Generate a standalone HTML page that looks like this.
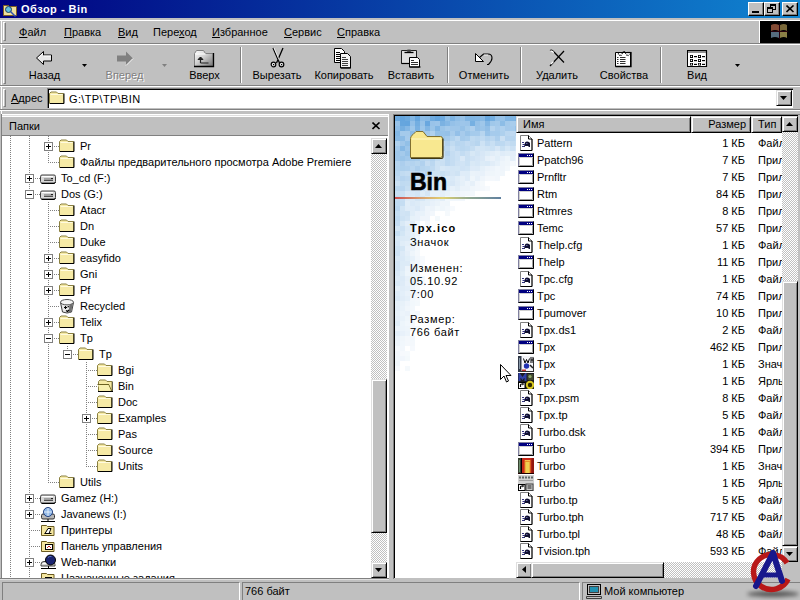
<!DOCTYPE html>
<html><head><meta charset="utf-8"><style>
*{margin:0;padding:0;box-sizing:border-box}
html,body{width:800px;height:600px;overflow:hidden;background:#c0c0c0;font-family:"Liberation Sans",sans-serif;font-size:11px;color:#000}
.a{position:absolute}
.t{position:absolute;white-space:pre;line-height:13px}
.u{text-decoration:underline;text-underline-offset:1px}
.tb{position:absolute;top:2px;width:16px;height:14px;background:#c0c0c0;border-top:1px solid #fff;border-left:1px solid #fff;border-right:1px solid #000;border-bottom:1px solid #000;box-shadow:inset -1px -1px 0 #808080}
.etch-h{position:absolute;height:2px;border-top:1px solid #808080;border-bottom:1px solid #fff}
.grip{position:absolute;width:3px;border-left:1px solid #fff;border-top:1px solid #fff;border-right:1px solid #808080;border-bottom:1px solid #808080}
.sep{position:absolute;width:2px;border-left:1px solid #808080;border-right:1px solid #fff}
.dl{position:absolute;width:1px;background-image:linear-gradient(to bottom,#808080 50%,transparent 50%);background-size:1px 2px}
.dh{position:absolute;height:1px;background-image:linear-gradient(to right,#808080 50%,transparent 50%);background-size:2px 1px}
.pb{position:absolute;width:9px;height:9px;border:1px solid #808080;background:#fff}
.pb:before{content:"";position:absolute;left:1px;top:3px;width:5px;height:1px;background:#000}
.pb.p:after{content:"";position:absolute;left:3px;top:1px;width:1px;height:5px;background:#000}
.track{background-color:#fff;background-image:linear-gradient(45deg,#c0c0c0 25%,transparent 25%,transparent 75%,#c0c0c0 75%),linear-gradient(45deg,#c0c0c0 25%,transparent 25%,transparent 75%,#c0c0c0 75%);background-size:2px 2px;background-position:0 0,1px 1px}
.btn{position:absolute;background:#c0c0c0;border-top:1px solid #dfdfdf;border-left:1px solid #dfdfdf;border-right:1px solid #000;border-bottom:1px solid #000;box-shadow:inset 1px 1px 0 #fff,inset -1px -1px 0 #808080}
.ic{position:absolute;overflow:visible}
.dis{color:#808080;text-shadow:1px 1px 0 #fff}
</style></head><body>

<svg width="0" height="0" style="position:absolute">
<defs>
 <symbol id="folder" viewBox="0 0 16 16">
  <path d="M0.5 13.5V3.5L2 2h5.5L9 3.5h5.5v10z" fill="#f6eaa6" stroke="#8a8040"/>
  <path d="M1.5 4.5h12" fill="none" stroke="#fffbe0"/>
  <path d="M1 13.5h14V3.5" fill="none" stroke="#000"/>
 </symbol>
 <symbol id="folderopen" viewBox="0 0 16 16">
  <path d="M1.5 13.5V3.5L3 2h5.5L10 3.5h5v10z" fill="#f6eaa6" stroke="#8a8040"/>
  <path d="M1 13.5h15V3.5" fill="none" stroke="#000"/>
  <path d="M0.5 6.5h11l3 6.5" fill="none" stroke="#6a6020" stroke-width="1.2"/>
  <path d="M1 7h10.5l2.5 5.5h-11z" fill="#f8f0b0"/>
 </symbol>
 <symbol id="drive" viewBox="0 0 16 16">
  <path d="M0.5 6.5q0-1.5 1.5-1.5h12q1.5 0 1.5 1.5v5q0 1.5-1.5 1.5h-12q-1.5 0-1.5-1.5z" fill="#d8d8d8" stroke="#404040"/>
  <path d="M2 6.5h11" fill="none" stroke="#fff"/>
  <rect x="4" y="8" width="9" height="2" fill="#a0a0a0"/>
  <path d="M4 10.5h9" fill="none" stroke="#505050"/>
  <path d="M11 8.5h2" fill="none" stroke="#202020"/>
  <path d="M1.5 13.5h13l1-1.5" fill="none" stroke="#000"/>
 </symbol>
 <symbol id="doc" viewBox="0 0 16 16">
  <path d="M2.5 15.5V0.5h8l3.5 3.5v11.5z" fill="#fff" stroke="#808080"/>
  <path d="M2.5 15.5h11.5V4M10.5 0.5v3.5h3.5" fill="none" stroke="#000"/>
  <path d="M7 7.5q1.5-1.5 4 -0.5l1 1v4h-1.5v-1h-3.5v1h-1z" fill="#101030"/>
  <path d="M4 7.5h2M4.5 9.5h2.5M4 11.5h2.5" fill="none" stroke="#303080"/>
  <path d="M8 8.5h1.5" fill="none" stroke="#6060a0"/>
 </symbol>
 <symbol id="app" viewBox="0 0 16 16">
  <rect x="0.5" y="1.5" width="15" height="13" fill="#fff" stroke="#8080a0"/>
  <path d="M0.5 14.5h15v-13" fill="none" stroke="#000"/>
  <rect x="1" y="2" width="14" height="3" fill="#000080"/>
  <path d="M9 3.5h1M11 3.5h1M13 3.5h1" fill="none" stroke="#fff"/>
  <path d="M1.5 13.5v-8h13" fill="none" stroke="#d0d0d0"/>
  <path d="M1.5 13.5h13v-8" fill="none" stroke="#a0a0a0"/>
 </symbol>
 <symbol id="cursor" viewBox="0 0 12 20">
  <path d="M0.5 0.5v15l3.5-3.5 2.5 6 2-1-2.5-5.5h5z" fill="#fff" stroke="#000"/>
 </symbol>
</defs>
</svg>

<div class="a" style="left:0;top:0;width:800px;height:18px;background:linear-gradient(to right,#000080 0%,#1084d0 100%)"></div>
<svg class="a" style="left:2px;top:1px" width="16" height="16" viewBox="0 0 16 16">
  <path d="M1.5 4.5h5l1 1h7v9h-13z" fill="#f0e0a0" stroke="#806020"/>
  <circle cx="6.5" cy="8.5" r="3" fill="#60c0e0" stroke="#204060"/>
  <path fill="none" d="M8.5 10.5l5 5" stroke="#3050b0" stroke-width="1.5"/>
</svg>
<div class="t" style="left:21px;top:3px;color:#fff;font-weight:bold;letter-spacing:0.5px">Обзор - Bin</div>
<div class="tb" style="left:748px"><div class="a" style="left:3px;top:8px;width:7px;height:2px;background:#000"></div></div>
<div class="tb" style="left:764px"><div class="a" style="left:5px;top:1px;width:6px;height:6px;border:1px solid #000;border-top-width:2px"></div><div class="a" style="left:2px;top:4px;width:6px;height:6px;border:1px solid #000;border-top-width:2px;background:#c0c0c0"></div></div>
<div class="tb" style="left:782px"><svg class="a" style="left:3px;top:2px" width="9" height="8"><path fill="none" d="M0.5 0.5l7 6.5M7.5 0.5l-7 6.5" stroke="#000" stroke-width="1.6"/></svg></div>
<div class="a" style="left:1px;top:19px;width:1px;height:95px;background:#fff"></div>
<div class="etch-h" style="left:0;top:19px;width:800px;border-top-color:#c0c0c0"></div>
<div class="grip" style="left:3px;top:22px;height:19px"></div>
<div class="t" style="left:19px;top:26px"><span class="u">Ф</span>айл</div>
<div class="t" style="left:64px;top:26px"><span class="u">П</span>равка</div>
<div class="t" style="left:118px;top:26px"><span class="u">В</span>ид</div>
<div class="t" style="left:153px;top:26px">Пере<span class="u">х</span>од</div>
<div class="t" style="left:212px;top:26px"><span class="u">И</span>збранное</div>
<div class="t" style="left:284px;top:26px"><span class="u">С</span>ервис</div>
<div class="t" style="left:337px;top:26px"><span class="u">С</span>правка</div>
<div class="a" style="left:759px;top:20px;width:41px;height:23px;background:#000;border-left:1px solid #fff;border-top:1px solid #fff"></div>
<svg class="a" style="left:768px;top:22px;opacity:0.8;filter:blur(0.4px)" width="24" height="18" viewBox="0 0 24 18">
  <path d="M3 3q4-2 8 0v6q-4-2-8 0z" fill="#b86848" opacity="0.9"/>
  <path d="M12 3q4-2 7 0v6q-3-2-7 0z" fill="#a89050" opacity="0.9"/>
  <path d="M3 10q4-2 8 0v6q-4-2-8 0z" fill="#7898b0" opacity="0.9"/>
  <path d="M12 10q4-2 7 0v6q-3-2-7 0z" fill="#c0b060" opacity="0.9"/>
  <path d="M11.5 2v15M3 9.5h17" stroke="#300010" stroke-width="1"/>
</svg>
<div class="etch-h" style="left:0;top:43px;width:800px"></div>
<div class="grip" style="left:3px;top:48px;height:36px"></div>
<div class="t" style="left:4.5px;width:80px;text-align:center;top:69px">Назад</div>
<div class="t dis" style="left:84.5px;width:80px;text-align:center;top:69px">Вперед</div>
<div class="t" style="left:164.5px;width:80px;text-align:center;top:69px">Вверх</div>
<div class="t" style="left:237px;width:80px;text-align:center;top:69px">Вырезать</div>
<div class="t" style="left:304px;width:80px;text-align:center;top:69px">Копировать</div>
<div class="t" style="left:371px;width:80px;text-align:center;top:69px">Вставить</div>
<div class="t" style="left:444px;width:80px;text-align:center;top:69px">Отменить</div>
<div class="t" style="left:517px;width:80px;text-align:center;top:69px">Удалить</div>
<div class="t" style="left:584px;width:80px;text-align:center;top:69px">Свойства</div>
<div class="t" style="left:657px;width:80px;text-align:center;top:69px">Вид</div>
<div class="sep" style="left:240px;top:47px;height:36px"></div>
<div class="sep" style="left:447px;top:47px;height:36px"></div>
<div class="sep" style="left:520px;top:47px;height:36px"></div>
<div class="sep" style="left:660px;top:47px;height:36px"></div>
<svg class="a" style="left:82px;top:64px" width="5" height="3"><path d="M0 0h5l-2.5 3z" fill="#000"/></svg>
<svg class="a" style="left:162px;top:64px" width="5" height="3"><path d="M0 0h5l-2.5 3z" fill="#808080"/></svg>
<svg class="a" style="left:735px;top:64px" width="5" height="3"><path d="M0 0h5l-2.5 3z" fill="#000"/></svg>

<svg class="ic" style="left:35px;top:51px" width="18" height="15" viewBox="0 0 18 15">
  <path d="M1.5 7l7-6.5v3.5h8v6h-8v3.5z" fill="#e8e8e8" stroke="#000"/>
  <path fill="none" d="M3 7l5-4.5M9 5h7" stroke="#fff"/>
</svg>
<svg class="ic" style="left:115px;top:51px" width="20" height="15" viewBox="0 0 20 15">
  <path d="M18 7.5l-7-7v4h-9v6h9v4z" fill="#808080"/>
  <path fill="none" d="M11 14.5l7-7" stroke="#fff"/>
</svg>
<svg class="ic" style="left:193px;top:49px" width="22" height="19" viewBox="0 0 22 19">
  <defs><linearGradient id="upg" x1="0" y1="0" x2="1" y2="1"><stop offset="0" stop-color="#ffffff"/><stop offset="0.45" stop-color="#d0d0d0"/><stop offset="1" stop-color="#707070"/></linearGradient></defs>
  <path d="M1.5 17.5V4.5L3.5 1.5h7l2 3h7.5v13z" fill="url(#upg)" stroke="#808080"/>
  <path d="M1 17.5h19.5V4" fill="none" stroke="#000" stroke-width="1.3"/>
  <path d="M2.5 5h10" fill="none" stroke="#fff"/>
  <path d="M7.5 14h8M7.5 14v-6" fill="none" stroke="#202020" stroke-width="1.2"/>
  <path d="M5 10.5l2.5-2.5 2.5 2.5z" fill="#202020" stroke="#202020"/>
</svg>
<svg class="ic" style="left:270px;top:47px" width="16" height="21" viewBox="0 0 16 21">
  <path d="M3 1L9.5 16M13 1L6.5 16" fill="none" stroke="#000" stroke-width="1.3"/>
  <path d="M4 1l5 11.5" fill="none" stroke="#fff" stroke-width="0.8"/>
  <circle cx="3.5" cy="17.5" r="2.3" fill="#e8e8e8" stroke="#000" stroke-width="1.2"/>
  <circle cx="11.5" cy="17.5" r="2.3" fill="#e8e8e8" stroke="#000" stroke-width="1.2"/>
  <rect x="3" y="17" width="1.2" height="1.2" fill="#000"/><rect x="11" y="17" width="1.2" height="1.2" fill="#000"/>
</svg>
<svg class="ic" style="left:333px;top:48px" width="22" height="21" viewBox="0 0 22 21">
  <path d="M1.5 0.5h7l3 3v11h-10z" fill="#fff" stroke="#000"/>
  <path fill="none" d="M3 4.5h4M3 6.5h4M3 8.5h4M3 10.5h4M3 12.5h4" stroke="#000"/>
  <path d="M7.5 5.5h7l3 3v11.5h-10z" fill="#f4f4f4" stroke="#000"/>
  <path fill="none" d="M8 19.8h10" stroke="#000" stroke-width="1.2"/>
  <path fill="none" d="M9 9.5h4M9 11.5h6M9 13.5h6M9 15.5h6M9 17.5h6" stroke="#404040"/>
</svg>
<svg class="ic" style="left:400px;top:49px" width="22" height="19" viewBox="0 0 22 19">
  <path d="M1.5 1.5h15v13h-15z" fill="#e0e0e0" stroke="#202020"/>
  <path fill="none" d="M4.5 3.5h9" stroke="#000" stroke-width="1.3"/>
  <ellipse cx="9" cy="1.8" rx="2.5" ry="1.2" fill="#404040"/>
  <path fill="none" d="M1.5 14.5h15" stroke="#000" stroke-width="1.2"/>
  <path d="M9.5 8.5h8l2 2v7.5h-10z" fill="#fff" stroke="#000"/>
  <path fill="none" d="M11 11.5h3M11 13.5h7M11 15.5h7" stroke="#303030"/>
  <path fill="none" d="M9.5 18h11" stroke="#000" stroke-width="1.2"/>
</svg>
<svg class="ic" style="left:474px;top:50px" width="20" height="16" viewBox="0 0 20 16">
  <path d="M1.5 3.5v8h8z" fill="#fff" stroke="#000"/>
  <path d="M5.5 7.5l4-3.5h4.5q4 0 4 4q0 3-3.5 6.5h-1.5" fill="none" stroke="#000" stroke-width="1.1"/>
  <path d="M10 5h4" fill="none" stroke="#fff" stroke-width="0.8"/>
</svg>
<svg class="ic" style="left:547px;top:48px" width="20" height="20" viewBox="0 0 20 20">
  <path d="M3 2.5q2-1 4 1.5l10 10.5" fill="none" stroke="#000" stroke-width="1.2"/>
  <path fill="none" d="M17 3l-14 15" stroke="#000" stroke-width="1.2"/>
  <path fill="none" d="M3.5 2.8q2 0 3.2 1.8" stroke="#fff" stroke-width="1.2"/>
  <path fill="none" d="M4 16l2.5-2.5" stroke="#fff" stroke-width="1.3"/>
</svg>
<svg class="ic" style="left:614px;top:49px" width="20" height="19" viewBox="0 0 20 19">
  <path d="M1.5 3.5h15v14h-15z" fill="#fff" stroke="#000"/>
  <path fill="none" d="M1.5 17.5h15.5v-14" stroke="#000" stroke-width="1.3"/>
  <path d="M4 4.5l2.5 2.5 3.5-5 3.5 5 2-2" fill="none" stroke="#000" stroke-width="1.2" stroke-dasharray="1 1"/>
  <path fill="none" d="M3 8.5h1.5M6 8.5h5.5M3 10.5h1.5M6 10.5h5.5M3 12.5h1.5M6 12.5h5.5M3 14.5h1.5M6 14.5h5.5" stroke="#303030"/>
  <path fill="none" d="M13 3.5h4.5" stroke="#000" stroke-width="1.2"/>
</svg>
<svg class="ic" style="left:686px;top:49px" width="22" height="19" viewBox="0 0 22 19">
  <rect x="1.5" y="1.5" width="19" height="16" fill="#fff" stroke="#000"/>
  <rect x="2" y="2" width="18" height="2" fill="#909090"/>
  <path fill="none" d="M20.5 1.5v16.5M1.5 17.5h19.5" stroke="#000" stroke-width="1.2"/>
  <g fill="#000">
   <rect x="4" y="6" width="3" height="3"/><rect x="8" y="7" width="3" height="1.2"/><rect x="12" y="6" width="3" height="3"/><rect x="16" y="7" width="3" height="1.2"/>
   <rect x="4" y="10" width="3" height="3"/><rect x="8" y="11" width="3" height="1.2"/><rect x="12" y="10" width="3" height="3"/><rect x="16" y="11" width="3" height="1.2"/>
   <rect x="4" y="14" width="3" height="2.5"/><rect x="8" y="14.8" width="3" height="1.2"/><rect x="12" y="14" width="3" height="2.5"/><rect x="16" y="14.8" width="3" height="1.2"/>
  </g>
  <g fill="#fff"><rect x="4.8" y="6.8" width="1.2" height="1.2"/><rect x="12.8" y="6.8" width="1.2" height="1.2"/><rect x="4.8" y="10.8" width="1.2" height="1.2"/><rect x="12.8" y="10.8" width="1.2" height="1.2"/><rect x="4.8" y="14.6" width="1.2" height="1.2"/><rect x="12.8" y="14.6" width="1.2" height="1.2"/></g>
</svg>
<div class="etch-h" style="left:0;top:85px;width:800px"></div>

<div class="grip" style="left:3px;top:89px;height:18px"></div>
<div class="t" style="left:11px;top:92px"><span class="u">А</span>дрес</div>
<div class="a" style="left:47px;top:88px;width:746px;height:20px;background:#fff;border-top:1px solid #808080;border-left:1px solid #808080;box-shadow:inset 1px 1px 0 #000"></div>
<svg class="a" style="left:49px;top:90px" width="16" height="16"><use href="#folder"/></svg>
<div class="t" style="left:69px;top:93px;letter-spacing:0.35px">G:\TP\TP\BIN</div>
<div class="btn" style="left:776px;top:90px;width:16px;height:16px"><svg class="a" style="left:3px;top:5px" width="8" height="5"><path d="M0 0h7l-3.5 4z" fill="#000"/></svg></div>
<div class="etch-h" style="left:0;top:109px;width:800px"></div>

<div class="a" style="left:1px;top:114px;width:388px;height:464px;background:#fff;border-left:1px solid #808080"></div>
<div class="a" style="left:2px;top:115px;width:386px;height:21px;background:#c0c0c0;border-top:1px solid #dfdfdf;box-shadow:inset 0 1px 0 #fff;border-bottom:1px solid #808080"></div>
<div class="t" style="left:9px;top:120px">Папки</div>
<svg class="a" style="left:372px;top:122px" width="9" height="8"><path fill="none" d="M0.5 0.5l7 6.5M7.5 0.5l-7 6.5" stroke="#000" stroke-width="1.6"/></svg>
<div class="a" style="left:2px;top:136px;width:369px;height:442px;overflow:hidden">
<div class="dl" style="left:8px;top:0px;height:441px"></div>
<div class="dl" style="left:27px;top:0px;height:441px"></div>
<div class="dl" style="left:46px;top:0px;height:26px"></div>
<div class="dl" style="left:46px;top:66px;height:280px"></div>
<div class="dl" style="left:65px;top:210px;height:8px"></div>
<div class="dl" style="left:84px;top:226px;height:104px"></div>
<div class="dh" style="left:46px;top:10px;width:11px"></div>
<div class="pb p" style="left:42px;top:6px"></div>
<svg class="a" style="left:57px;top:2px" width="16" height="16"><use href="#folder"/></svg>
<div class="t" style="left:78px;top:4px">Pr</div>
<div class="dh" style="left:46px;top:26px;width:11px"></div>
<svg class="a" style="left:57px;top:18px" width="16" height="16"><use href="#folder"/></svg>
<div class="t" style="left:78px;top:20px">Файлы предварительного просмотра Adobe Premiere</div>
<div class="dh" style="left:27px;top:42px;width:11px"></div>
<div class="pb p" style="left:23px;top:38px"></div>
<svg class="a" style="left:38px;top:34px" width="16" height="16"><use href="#drive"/></svg>
<div class="t" style="left:59px;top:36px">To_cd (F:)</div>
<div class="dh" style="left:27px;top:58px;width:11px"></div>
<div class="pb" style="left:23px;top:54px"></div>
<svg class="a" style="left:38px;top:50px" width="16" height="16"><use href="#drive"/></svg>
<div class="t" style="left:59px;top:52px">Dos (G:)</div>
<div class="dh" style="left:46px;top:74px;width:11px"></div>
<svg class="a" style="left:57px;top:66px" width="16" height="16"><use href="#folder"/></svg>
<div class="t" style="left:78px;top:68px">Atacr</div>
<div class="dh" style="left:46px;top:90px;width:11px"></div>
<svg class="a" style="left:57px;top:82px" width="16" height="16"><use href="#folder"/></svg>
<div class="t" style="left:78px;top:84px">Dn</div>
<div class="dh" style="left:46px;top:106px;width:11px"></div>
<svg class="a" style="left:57px;top:98px" width="16" height="16"><use href="#folder"/></svg>
<div class="t" style="left:78px;top:100px">Duke</div>
<div class="dh" style="left:46px;top:122px;width:11px"></div>
<div class="pb p" style="left:42px;top:118px"></div>
<svg class="a" style="left:57px;top:114px" width="16" height="16"><use href="#folder"/></svg>
<div class="t" style="left:78px;top:116px">easyfido</div>
<div class="dh" style="left:46px;top:138px;width:11px"></div>
<div class="pb p" style="left:42px;top:134px"></div>
<svg class="a" style="left:57px;top:130px" width="16" height="16"><use href="#folder"/></svg>
<div class="t" style="left:78px;top:132px">Gni</div>
<div class="dh" style="left:46px;top:154px;width:11px"></div>
<div class="pb p" style="left:42px;top:150px"></div>
<svg class="a" style="left:57px;top:146px" width="16" height="16"><use href="#folder"/></svg>
<div class="t" style="left:78px;top:148px">Pf</div>
<div class="dh" style="left:46px;top:170px;width:11px"></div>
<svg class="a" style="left:57px;top:162px" width="16" height="16" viewBox="0 0 16 16"><path d="M1.5 4.5L3.5 14q4.5 2 9 0l2-9.5z" fill="#e8e8e8" stroke="#404040"/><ellipse cx="8" cy="4.2" rx="6.5" ry="2.7" fill="#f4f4f4" stroke="#505050"/><path d="M10.5 6.5l3.5-1.5-1.8 9-2.7 1.3z" fill="#707070"/><path d="M5 9.5h3M6.5 8v3M7 12.5l1.5 1 1.5-1.5M8.5 9l1.5-.5" fill="none" stroke="#000" stroke-width="1.1"/></svg>
<div class="t" style="left:78px;top:164px">Recycled</div>
<div class="dh" style="left:46px;top:186px;width:11px"></div>
<div class="pb p" style="left:42px;top:182px"></div>
<svg class="a" style="left:57px;top:178px" width="16" height="16"><use href="#folder"/></svg>
<div class="t" style="left:78px;top:180px">Telix</div>
<div class="dh" style="left:46px;top:202px;width:11px"></div>
<div class="pb" style="left:42px;top:198px"></div>
<svg class="a" style="left:57px;top:194px" width="16" height="16"><use href="#folder"/></svg>
<div class="t" style="left:78px;top:196px">Tp</div>
<div class="dh" style="left:65px;top:218px;width:11px"></div>
<div class="pb" style="left:61px;top:214px"></div>
<svg class="a" style="left:76px;top:210px" width="16" height="16"><use href="#folder"/></svg>
<div class="t" style="left:97px;top:212px">Tp</div>
<div class="dh" style="left:84px;top:234px;width:11px"></div>
<svg class="a" style="left:95px;top:226px" width="16" height="16"><use href="#folder"/></svg>
<div class="t" style="left:116px;top:228px">Bgi</div>
<div class="dh" style="left:84px;top:250px;width:11px"></div>
<svg class="a" style="left:95px;top:242px" width="16" height="16"><use href="#folderopen"/></svg>
<div class="t" style="left:116px;top:244px">Bin</div>
<div class="dh" style="left:84px;top:266px;width:11px"></div>
<svg class="a" style="left:95px;top:258px" width="16" height="16"><use href="#folder"/></svg>
<div class="t" style="left:116px;top:260px">Doc</div>
<div class="dh" style="left:84px;top:282px;width:11px"></div>
<div class="pb p" style="left:80px;top:278px"></div>
<svg class="a" style="left:95px;top:274px" width="16" height="16"><use href="#folder"/></svg>
<div class="t" style="left:116px;top:276px">Examples</div>
<div class="dh" style="left:84px;top:298px;width:11px"></div>
<svg class="a" style="left:95px;top:290px" width="16" height="16"><use href="#folder"/></svg>
<div class="t" style="left:116px;top:292px">Pas</div>
<div class="dh" style="left:84px;top:314px;width:11px"></div>
<svg class="a" style="left:95px;top:306px" width="16" height="16"><use href="#folder"/></svg>
<div class="t" style="left:116px;top:308px">Source</div>
<div class="dh" style="left:84px;top:330px;width:11px"></div>
<svg class="a" style="left:95px;top:322px" width="16" height="16"><use href="#folder"/></svg>
<div class="t" style="left:116px;top:324px">Units</div>
<div class="dh" style="left:46px;top:346px;width:11px"></div>
<svg class="a" style="left:57px;top:338px" width="16" height="16"><use href="#folder"/></svg>
<div class="t" style="left:78px;top:340px">Utils</div>
<div class="dh" style="left:27px;top:362px;width:11px"></div>
<div class="pb p" style="left:23px;top:358px"></div>
<svg class="a" style="left:38px;top:354px" width="16" height="16"><use href="#drive"/></svg>
<div class="t" style="left:59px;top:356px">Gamez (H:)</div>
<div class="dh" style="left:27px;top:378px;width:11px"></div>
<div class="pb p" style="left:23px;top:374px"></div>
<svg class="a" style="left:38px;top:370px" width="16" height="16" viewBox="0 0 16 16"><path d="M1.5 9.5q0-1.5 1.5-1.5h10q1.5 0 1.5 1.5v2q0 1.5-1.5 1.5h-10q-1.5 0-1.5-1.5z" fill="#b8b8b8" stroke="#303030"/><circle cx="8" cy="6" r="4.5" fill="#90b8e8" stroke="#204080"/><path fill="none" d="M4 6h8M8 2v8" stroke="#fff" stroke-opacity="0.7"/><path fill="none" d="M1 15.5h14M8 13v2" stroke="#000"/></svg>
<div class="t" style="left:59px;top:372px">Javanews (I:)</div>
<div class="dh" style="left:27px;top:394px;width:11px"></div>
<svg class="a" style="left:38px;top:386px" width="16" height="16" viewBox="0 0 16 16"><path d="M1.5 3.5h5l1 1h6.5v9h-12.5z" fill="#f4e6a0" stroke="#6a5a20"/><path d="M5 11.5l3-5h3l-2 5z" fill="#fff" stroke="#000"/><path fill="none" d="M4.5 11.5h7" stroke="#000"/></svg>
<div class="t" style="left:59px;top:388px">Принтеры</div>
<div class="dh" style="left:27px;top:410px;width:11px"></div>
<svg class="a" style="left:38px;top:402px" width="16" height="16" viewBox="0 0 16 16"><path d="M1.5 3.5h5l1 1h6.5v9h-12.5z" fill="#f4e6a0" stroke="#6a5a20"/><rect x="5.5" y="6.5" width="7" height="5" fill="#fff" stroke="#000"/><path d="M7 10l2-2 2 2" stroke="#c02020" fill="none"/></svg>
<div class="t" style="left:59px;top:404px">Панель управления</div>
<div class="dh" style="left:27px;top:426px;width:11px"></div>
<div class="pb p" style="left:23px;top:422px"></div>
<svg class="a" style="left:38px;top:418px" width="16" height="16" viewBox="0 0 16 16"><path d="M1 10.5q0-3 3-3h8q3 0 3 3v1.5h-14z" fill="#d8d8d8" stroke="#404040"/><path d="M2.5 9.5h6" stroke="#fff" fill="none"/><circle cx="10.5" cy="6" r="5" fill="#1a2470" stroke="#000"/><path d="M8 3.5q1.5-1.5 3.5-1" stroke="#5a70c0" fill="none"/><path d="M1 14.5h15M8.5 12v2.5" stroke="#000" fill="none"/></svg>
<div class="t" style="left:59px;top:420px">Web-папки</div>
<div class="dh" style="left:27px;top:442px;width:11px"></div>
<svg class="a" style="left:38px;top:434px" width="16" height="16" viewBox="0 0 16 16"><path d="M1.5 3.5h5l1 1h6.5v9h-12.5z" fill="#f4e6a0" stroke="#6a5a20"/><rect x="5.5" y="7.5" width="6" height="5" fill="#fff" stroke="#000"/></svg>
<div class="t" style="left:59px;top:436px">Назначенные задания</div>
</div>

<div class="a track" style="left:371px;top:138px;width:16px;height:439px"></div>
<div class="btn" style="left:371px;top:138px;width:16px;height:16px"><svg class="a" style="left:3px;top:5px" width="8" height="5"><path d="M0 4h7l-3.5-4z" fill="#000"/></svg></div>
<div class="btn" style="left:371px;top:379px;width:16px;height:154px"></div>
<div class="btn" style="left:371px;top:562px;width:16px;height:16px"><svg class="a" style="left:3px;top:5px" width="8" height="5"><path d="M0 0h7l-3.5 4z" fill="#000"/></svg></div>
<div class="a" style="left:388px;top:114px;width:1px;height:464px;background:#fff"></div>
<div class="a" style="left:0px;top:578px;width:389px;height:1px;background:#808080"></div>
<div class="a" style="left:0px;top:579px;width:389px;height:1px;background:#dfdfdf"></div>

<div class="a" style="left:393px;top:114px;width:407px;height:1px;background:#808080"></div>
<div class="a" style="left:393px;top:114px;width:1px;height:465px;background:#808080"></div>
<div class="a" style="left:394px;top:115px;width:406px;height:463px;background:#fff;overflow:hidden">
 <div class="a" style="left:0;top:0;width:406px;height:1px;background:#000"></div>
 <div class="a" style="left:0;top:0;width:1px;height:463px;background:#000"></div>
 <svg class="a" style="left:1px;top:1px" width="122" height="320" shape-rendering="crispEdges"><rect x="0" y="0" width="5" height="5" fill="#6daadf"/><rect x="5" y="0" width="5" height="5" fill="#64a5de"/><rect x="10" y="0" width="5" height="5" fill="#6caadf"/><rect x="15" y="0" width="5" height="5" fill="#81b6e4"/><rect x="20" y="0" width="5" height="5" fill="#66a6de"/><rect x="25" y="0" width="5" height="5" fill="#8bbbe6"/><rect x="30" y="0" width="5" height="5" fill="#87b9e5"/><rect x="35" y="0" width="5" height="5" fill="#6fabe0"/><rect x="40" y="0" width="5" height="5" fill="#64a5de"/><rect x="45" y="0" width="5" height="5" fill="#6fabe0"/><rect x="50" y="0" width="5" height="5" fill="#90bfe7"/><rect x="55" y="0" width="5" height="5" fill="#7eb4e3"/><rect x="60" y="0" width="5" height="5" fill="#8fbee7"/><rect x="65" y="0" width="5" height="5" fill="#97c2e8"/><rect x="70" y="0" width="5" height="5" fill="#80b5e3"/><rect x="75" y="0" width="5" height="5" fill="#7fb5e3"/><rect x="80" y="0" width="5" height="5" fill="#81b6e4"/><rect x="85" y="0" width="5" height="5" fill="#89bae5"/><rect x="90" y="0" width="5" height="5" fill="#69a8df"/><rect x="95" y="0" width="5" height="5" fill="#75afe1"/><rect x="100" y="0" width="5" height="5" fill="#94c1e8"/><rect x="105" y="0" width="5" height="5" fill="#98c3e9"/><rect x="110" y="0" width="5" height="5" fill="#81b6e4"/><rect x="115" y="0" width="5" height="5" fill="#7fb5e3"/><rect x="120" y="0" width="5" height="5" fill="#78b0e2"/><rect x="0" y="5" width="5" height="5" fill="#97c2e8"/><rect x="5" y="5" width="5" height="5" fill="#66a6de"/><rect x="10" y="5" width="5" height="5" fill="#64a5de"/><rect x="15" y="5" width="5" height="5" fill="#93c0e8"/><rect x="20" y="5" width="5" height="5" fill="#73aee1"/><rect x="25" y="5" width="5" height="5" fill="#97c2e8"/><rect x="30" y="5" width="5" height="5" fill="#69a7df"/><rect x="35" y="5" width="5" height="5" fill="#99c3e9"/><rect x="40" y="5" width="5" height="5" fill="#9cc5ea"/><rect x="45" y="5" width="5" height="5" fill="#7bb2e2"/><rect x="50" y="5" width="5" height="5" fill="#85b8e5"/><rect x="55" y="5" width="5" height="5" fill="#95c1e8"/><rect x="60" y="5" width="5" height="5" fill="#9ac4e9"/><rect x="65" y="5" width="5" height="5" fill="#9ec6ea"/><rect x="70" y="5" width="5" height="5" fill="#9cc5ea"/><rect x="75" y="5" width="5" height="5" fill="#76b0e2"/><rect x="80" y="5" width="5" height="5" fill="#95c1e8"/><rect x="85" y="5" width="5" height="5" fill="#9fc7ea"/><rect x="90" y="5" width="5" height="5" fill="#82b6e4"/><rect x="95" y="5" width="5" height="5" fill="#a0c8ea"/><rect x="100" y="5" width="5" height="5" fill="#a4caeb"/><rect x="105" y="5" width="5" height="5" fill="#8dbde6"/><rect x="110" y="5" width="5" height="5" fill="#a4caeb"/><rect x="115" y="5" width="5" height="5" fill="#a9cdec"/><rect x="120" y="5" width="5" height="5" fill="#a4caeb"/><rect x="0" y="10" width="5" height="5" fill="#8ebde7"/><rect x="5" y="10" width="5" height="5" fill="#75afe1"/><rect x="10" y="10" width="5" height="5" fill="#85b8e5"/><rect x="15" y="10" width="5" height="5" fill="#9ec7ea"/><rect x="20" y="10" width="5" height="5" fill="#79b1e2"/><rect x="25" y="10" width="5" height="5" fill="#9dc6ea"/><rect x="30" y="10" width="5" height="5" fill="#82b6e4"/><rect x="35" y="10" width="5" height="5" fill="#9bc5e9"/><rect x="40" y="10" width="5" height="5" fill="#82b6e4"/><rect x="45" y="10" width="5" height="5" fill="#9bc5e9"/><rect x="50" y="10" width="5" height="5" fill="#a4caeb"/><rect x="55" y="10" width="5" height="5" fill="#a0c7ea"/><rect x="60" y="10" width="5" height="5" fill="#9fc7ea"/><rect x="65" y="10" width="5" height="5" fill="#97c2e8"/><rect x="70" y="10" width="5" height="5" fill="#a5cbeb"/><rect x="75" y="10" width="5" height="5" fill="#afd0ee"/><rect x="80" y="10" width="5" height="5" fill="#97c2e8"/><rect x="85" y="10" width="5" height="5" fill="#9cc5e9"/><rect x="90" y="10" width="5" height="5" fill="#92bfe7"/><rect x="95" y="10" width="5" height="5" fill="#b5d4ef"/><rect x="100" y="10" width="5" height="5" fill="#a8ccec"/><rect x="105" y="10" width="5" height="5" fill="#b0d1ee"/><rect x="110" y="10" width="5" height="5" fill="#a5caeb"/><rect x="115" y="10" width="5" height="5" fill="#a6cbec"/><rect x="120" y="10" width="5" height="5" fill="#94c1e8"/><rect x="0" y="15" width="5" height="5" fill="#83b7e4"/><rect x="5" y="15" width="5" height="5" fill="#a4caeb"/><rect x="10" y="15" width="5" height="5" fill="#a4caeb"/><rect x="15" y="15" width="5" height="5" fill="#89bae6"/><rect x="20" y="15" width="5" height="5" fill="#abceed"/><rect x="25" y="15" width="5" height="5" fill="#9bc5e9"/><rect x="30" y="15" width="5" height="5" fill="#a1c8eb"/><rect x="35" y="15" width="5" height="5" fill="#b0d1ee"/><rect x="40" y="15" width="5" height="5" fill="#94c1e8"/><rect x="45" y="15" width="5" height="5" fill="#97c3e9"/><rect x="50" y="15" width="5" height="5" fill="#95c1e8"/><rect x="55" y="15" width="5" height="5" fill="#a8ccec"/><rect x="60" y="15" width="5" height="5" fill="#94c0e8"/><rect x="65" y="15" width="5" height="5" fill="#a7cbec"/><rect x="70" y="15" width="5" height="5" fill="#9ac4e9"/><rect x="75" y="15" width="5" height="5" fill="#a5cbec"/><rect x="80" y="15" width="5" height="5" fill="#a6cbec"/><rect x="85" y="15" width="5" height="5" fill="#b7d5ef"/><rect x="90" y="15" width="5" height="5" fill="#98c3e9"/><rect x="95" y="15" width="5" height="5" fill="#a6cbec"/><rect x="100" y="15" width="5" height="5" fill="#a5cbec"/><rect x="105" y="15" width="5" height="5" fill="#aed0ed"/><rect x="110" y="15" width="5" height="5" fill="#bbd7f0"/><rect x="115" y="15" width="5" height="5" fill="#bfd9f1"/><rect x="120" y="15" width="5" height="5" fill="#b5d4ef"/><rect x="0" y="20" width="5" height="5" fill="#89bae5"/><rect x="5" y="20" width="5" height="5" fill="#8cbce6"/><rect x="10" y="20" width="5" height="5" fill="#a6cbec"/><rect x="15" y="20" width="5" height="5" fill="#a1c8eb"/><rect x="20" y="20" width="5" height="5" fill="#adcfed"/><rect x="25" y="20" width="5" height="5" fill="#91bfe7"/><rect x="30" y="20" width="5" height="5" fill="#a3c9eb"/><rect x="35" y="20" width="5" height="5" fill="#accfed"/><rect x="40" y="20" width="5" height="5" fill="#b5d4ef"/><rect x="45" y="20" width="5" height="5" fill="#a0c8ea"/><rect x="50" y="20" width="5" height="5" fill="#a6cbec"/><rect x="55" y="20" width="5" height="5" fill="#b1d2ee"/><rect x="60" y="20" width="5" height="5" fill="#bed9f1"/><rect x="65" y="20" width="5" height="5" fill="#a6cbec"/><rect x="70" y="20" width="5" height="5" fill="#aaceed"/><rect x="75" y="20" width="5" height="5" fill="#bfdaf1"/><rect x="80" y="20" width="5" height="5" fill="#bad7f0"/><rect x="85" y="20" width="5" height="5" fill="#c0daf1"/><rect x="90" y="20" width="5" height="5" fill="#b5d4ef"/><rect x="95" y="20" width="5" height="5" fill="#bbd7f0"/><rect x="100" y="20" width="5" height="5" fill="#adcfed"/><rect x="105" y="20" width="5" height="5" fill="#cbe0f3"/><rect x="110" y="20" width="5" height="5" fill="#b6d4ef"/><rect x="115" y="20" width="5" height="5" fill="#b7d5ef"/><rect x="120" y="20" width="5" height="5" fill="#c0daf1"/><rect x="0" y="25" width="5" height="5" fill="#aed0ed"/><rect x="5" y="25" width="5" height="5" fill="#a0c7ea"/><rect x="10" y="25" width="5" height="5" fill="#92c0e7"/><rect x="15" y="25" width="5" height="5" fill="#b2d2ee"/><rect x="20" y="25" width="5" height="5" fill="#9fc7ea"/><rect x="25" y="25" width="5" height="5" fill="#a0c8ea"/><rect x="30" y="25" width="5" height="5" fill="#9ac4e9"/><rect x="35" y="25" width="5" height="5" fill="#a9cdec"/><rect x="40" y="25" width="5" height="5" fill="#b3d3ee"/><rect x="45" y="25" width="5" height="5" fill="#c2dbf2"/><rect x="50" y="25" width="5" height="5" fill="#b2d2ee"/><rect x="55" y="25" width="5" height="5" fill="#c1dbf1"/><rect x="60" y="25" width="5" height="5" fill="#b7d5ef"/><rect x="65" y="25" width="5" height="5" fill="#bad7f0"/><rect x="70" y="25" width="5" height="5" fill="#c2dbf2"/><rect x="75" y="25" width="5" height="5" fill="#bdd8f0"/><rect x="80" y="25" width="5" height="5" fill="#b7d5ef"/><rect x="85" y="25" width="5" height="5" fill="#cde2f4"/><rect x="90" y="25" width="5" height="5" fill="#bed9f1"/><rect x="95" y="25" width="5" height="5" fill="#c8dff3"/><rect x="100" y="25" width="5" height="5" fill="#bbd7f0"/><rect x="105" y="25" width="5" height="5" fill="#bdd9f1"/><rect x="110" y="25" width="5" height="5" fill="#c7def3"/><rect x="115" y="25" width="5" height="5" fill="#c1dbf1"/><rect x="120" y="25" width="5" height="5" fill="#c4ddf2"/><rect x="0" y="30" width="5" height="5" fill="#a3c9eb"/><rect x="5" y="30" width="5" height="5" fill="#87b9e5"/><rect x="10" y="30" width="5" height="5" fill="#9dc6ea"/><rect x="15" y="30" width="5" height="5" fill="#a7ccec"/><rect x="20" y="30" width="5" height="5" fill="#9dc6ea"/><rect x="25" y="30" width="5" height="5" fill="#b9d6f0"/><rect x="30" y="30" width="5" height="5" fill="#aacdec"/><rect x="35" y="30" width="5" height="5" fill="#b6d4ef"/><rect x="40" y="30" width="5" height="5" fill="#afd0ee"/><rect x="45" y="30" width="5" height="5" fill="#b2d2ee"/><rect x="50" y="30" width="5" height="5" fill="#bcd8f0"/><rect x="55" y="30" width="5" height="5" fill="#cae0f3"/><rect x="60" y="30" width="5" height="5" fill="#bed9f1"/><rect x="65" y="30" width="5" height="5" fill="#bad7f0"/><rect x="70" y="30" width="5" height="5" fill="#bdd9f1"/><rect x="75" y="30" width="5" height="5" fill="#c5ddf2"/><rect x="80" y="30" width="5" height="5" fill="#d3e5f5"/><rect x="85" y="30" width="5" height="5" fill="#d2e5f5"/><rect x="90" y="30" width="5" height="5" fill="#cfe3f4"/><rect x="95" y="30" width="5" height="5" fill="#cbe1f4"/><rect x="100" y="30" width="5" height="5" fill="#d7e7f6"/><rect x="105" y="30" width="5" height="5" fill="#c9e0f3"/><rect x="110" y="30" width="5" height="5" fill="#d5e7f6"/><rect x="115" y="30" width="5" height="5" fill="#cce1f4"/><rect x="120" y="30" width="5" height="5" fill="#d6e7f6"/><rect x="0" y="35" width="5" height="5" fill="#9fc7ea"/><rect x="5" y="35" width="5" height="5" fill="#a4caeb"/><rect x="10" y="35" width="5" height="5" fill="#96c2e8"/><rect x="15" y="35" width="5" height="5" fill="#aacded"/><rect x="20" y="35" width="5" height="5" fill="#abceed"/><rect x="25" y="35" width="5" height="5" fill="#aed0ed"/><rect x="30" y="35" width="5" height="5" fill="#b3d2ee"/><rect x="35" y="35" width="5" height="5" fill="#a5caeb"/><rect x="40" y="35" width="5" height="5" fill="#c0daf1"/><rect x="45" y="35" width="5" height="5" fill="#c7def3"/><rect x="50" y="35" width="5" height="5" fill="#b4d3ef"/><rect x="55" y="35" width="5" height="5" fill="#c5ddf2"/><rect x="60" y="35" width="5" height="5" fill="#cce1f4"/><rect x="65" y="35" width="5" height="5" fill="#c3dcf2"/><rect x="70" y="35" width="5" height="5" fill="#cbe0f3"/><rect x="75" y="35" width="5" height="5" fill="#d7e8f6"/><rect x="80" y="35" width="5" height="5" fill="#d1e4f5"/><rect x="85" y="35" width="5" height="5" fill="#d7e7f6"/><rect x="90" y="35" width="5" height="5" fill="#dcebf7"/><rect x="95" y="35" width="5" height="5" fill="#e1edf8"/><rect x="100" y="35" width="5" height="5" fill="#e5f0f9"/><rect x="105" y="35" width="5" height="5" fill="#dfecf8"/><rect x="110" y="35" width="5" height="5" fill="#e2eef8"/><rect x="115" y="35" width="5" height="5" fill="#e3eef9"/><rect x="120" y="35" width="5" height="5" fill="#e3eef9"/><rect x="0" y="40" width="5" height="5" fill="#a0c7ea"/><rect x="5" y="40" width="5" height="5" fill="#9bc5e9"/><rect x="10" y="40" width="5" height="5" fill="#a2c9eb"/><rect x="15" y="40" width="5" height="5" fill="#a4caeb"/><rect x="20" y="40" width="5" height="5" fill="#a7ccec"/><rect x="25" y="40" width="5" height="5" fill="#b6d5ef"/><rect x="30" y="40" width="5" height="5" fill="#bbd7f0"/><rect x="35" y="40" width="5" height="5" fill="#b4d3ef"/><rect x="40" y="40" width="5" height="5" fill="#c3dcf2"/><rect x="45" y="40" width="5" height="5" fill="#cbe1f4"/><rect x="50" y="40" width="5" height="5" fill="#bdd9f1"/><rect x="55" y="40" width="5" height="5" fill="#c5ddf2"/><rect x="60" y="40" width="5" height="5" fill="#cbe1f4"/><rect x="65" y="40" width="5" height="5" fill="#dae9f7"/><rect x="70" y="40" width="5" height="5" fill="#cae0f3"/><rect x="75" y="40" width="5" height="5" fill="#d0e3f5"/><rect x="80" y="40" width="5" height="5" fill="#d5e6f6"/><rect x="85" y="40" width="5" height="5" fill="#d9e8f6"/><rect x="90" y="40" width="5" height="5" fill="#e6f0f9"/><rect x="95" y="40" width="5" height="5" fill="#eaf2fa"/><rect x="100" y="40" width="5" height="5" fill="#e3eff9"/><rect x="105" y="40" width="5" height="5" fill="#eaf2fa"/><rect x="110" y="40" width="5" height="5" fill="#eff6fb"/><rect x="115" y="40" width="5" height="5" fill="#e5eff9"/><rect x="120" y="40" width="5" height="5" fill="#edf4fb"/><rect x="0" y="45" width="5" height="5" fill="#b5d4ef"/><rect x="5" y="45" width="5" height="5" fill="#acceed"/><rect x="10" y="45" width="5" height="5" fill="#b6d4ef"/><rect x="15" y="45" width="5" height="5" fill="#b3d3ef"/><rect x="20" y="45" width="5" height="5" fill="#b8d6ef"/><rect x="25" y="45" width="5" height="5" fill="#b1d1ee"/><rect x="30" y="45" width="5" height="5" fill="#c6ddf2"/><rect x="35" y="45" width="5" height="5" fill="#bbd7f0"/><rect x="40" y="45" width="5" height="5" fill="#cde2f4"/><rect x="45" y="45" width="5" height="5" fill="#cae0f3"/><rect x="50" y="45" width="5" height="5" fill="#bed9f1"/><rect x="55" y="45" width="5" height="5" fill="#c5ddf2"/><rect x="60" y="45" width="5" height="5" fill="#cee2f4"/><rect x="65" y="45" width="5" height="5" fill="#d1e4f5"/><rect x="70" y="45" width="5" height="5" fill="#cbe1f4"/><rect x="75" y="45" width="5" height="5" fill="#d9e9f6"/><rect x="80" y="45" width="5" height="5" fill="#d6e7f6"/><rect x="85" y="45" width="5" height="5" fill="#dcebf7"/><rect x="90" y="45" width="5" height="5" fill="#daeaf7"/><rect x="95" y="45" width="5" height="5" fill="#e1edf8"/><rect x="100" y="45" width="5" height="5" fill="#e7f1fa"/><rect x="105" y="45" width="5" height="5" fill="#eef5fb"/><rect x="110" y="45" width="5" height="5" fill="#f0f6fb"/><rect x="115" y="45" width="5" height="5" fill="#f6f9fd"/><rect x="120" y="45" width="5" height="5" fill="#f3f8fc"/><rect x="0" y="50" width="5" height="5" fill="#b3d3ee"/><rect x="5" y="50" width="5" height="5" fill="#aed0ed"/><rect x="10" y="50" width="5" height="5" fill="#b0d1ee"/><rect x="15" y="50" width="5" height="5" fill="#b8d6f0"/><rect x="20" y="50" width="5" height="5" fill="#adcfed"/><rect x="25" y="50" width="5" height="5" fill="#b7d5ef"/><rect x="30" y="50" width="5" height="5" fill="#bad7f0"/><rect x="35" y="50" width="5" height="5" fill="#c0daf1"/><rect x="40" y="50" width="5" height="5" fill="#cee2f4"/><rect x="45" y="50" width="5" height="5" fill="#d7e8f6"/><rect x="50" y="50" width="5" height="5" fill="#d4e6f6"/><rect x="55" y="50" width="5" height="5" fill="#d2e5f5"/><rect x="60" y="50" width="5" height="5" fill="#d3e6f5"/><rect x="65" y="50" width="5" height="5" fill="#d0e3f5"/><rect x="70" y="50" width="5" height="5" fill="#d2e5f5"/><rect x="75" y="50" width="5" height="5" fill="#deebf8"/><rect x="80" y="50" width="5" height="5" fill="#ddebf7"/><rect x="85" y="50" width="5" height="5" fill="#e5f0f9"/><rect x="90" y="50" width="5" height="5" fill="#ebf3fa"/><rect x="95" y="50" width="5" height="5" fill="#edf4fb"/><rect x="100" y="50" width="5" height="5" fill="#f1f7fc"/><rect x="105" y="50" width="5" height="5" fill="#eff5fb"/><rect x="110" y="50" width="5" height="5" fill="#f3f8fc"/><rect x="0" y="55" width="5" height="5" fill="#b8d6f0"/><rect x="5" y="55" width="5" height="5" fill="#c1dbf1"/><rect x="10" y="55" width="5" height="5" fill="#c5ddf2"/><rect x="15" y="55" width="5" height="5" fill="#c4dcf2"/><rect x="20" y="55" width="5" height="5" fill="#bfdaf1"/><rect x="25" y="55" width="5" height="5" fill="#c2dbf2"/><rect x="30" y="55" width="5" height="5" fill="#b7d5ef"/><rect x="35" y="55" width="5" height="5" fill="#cfe3f4"/><rect x="40" y="55" width="5" height="5" fill="#cee3f4"/><rect x="45" y="55" width="5" height="5" fill="#c9e0f3"/><rect x="50" y="55" width="5" height="5" fill="#cfe3f4"/><rect x="55" y="55" width="5" height="5" fill="#d3e5f5"/><rect x="60" y="55" width="5" height="5" fill="#cfe3f4"/><rect x="65" y="55" width="5" height="5" fill="#dfecf8"/><rect x="70" y="55" width="5" height="5" fill="#deecf8"/><rect x="75" y="55" width="5" height="5" fill="#eaf3fa"/><rect x="80" y="55" width="5" height="5" fill="#e9f2fa"/><rect x="85" y="55" width="5" height="5" fill="#e8f1fa"/><rect x="90" y="55" width="5" height="5" fill="#eff5fb"/><rect x="95" y="55" width="5" height="5" fill="#eff6fb"/><rect x="100" y="55" width="5" height="5" fill="#f1f7fc"/><rect x="105" y="55" width="5" height="5" fill="#f0f6fb"/><rect x="0" y="60" width="5" height="5" fill="#bfd9f1"/><rect x="5" y="60" width="5" height="5" fill="#b6d4ef"/><rect x="10" y="60" width="5" height="5" fill="#bbd7f0"/><rect x="15" y="60" width="5" height="5" fill="#bfd9f1"/><rect x="20" y="60" width="5" height="5" fill="#c6def3"/><rect x="25" y="60" width="5" height="5" fill="#bcd8f0"/><rect x="30" y="60" width="5" height="5" fill="#d9e9f6"/><rect x="35" y="60" width="5" height="5" fill="#d4e6f5"/><rect x="40" y="60" width="5" height="5" fill="#d3e5f5"/><rect x="45" y="60" width="5" height="5" fill="#d8e8f6"/><rect x="50" y="60" width="5" height="5" fill="#ddebf7"/><rect x="55" y="60" width="5" height="5" fill="#d9e9f7"/><rect x="60" y="60" width="5" height="5" fill="#e0edf8"/><rect x="65" y="60" width="5" height="5" fill="#e6f0f9"/><rect x="70" y="60" width="5" height="5" fill="#dfecf8"/><rect x="75" y="60" width="5" height="5" fill="#eff6fb"/><rect x="80" y="60" width="5" height="5" fill="#e7f1fa"/><rect x="85" y="60" width="5" height="5" fill="#eff5fb"/><rect x="90" y="60" width="5" height="5" fill="#f4f8fc"/><rect x="95" y="60" width="5" height="5" fill="#f4f8fc"/><rect x="100" y="60" width="5" height="5" fill="#f2f7fc"/><rect x="0" y="65" width="5" height="5" fill="#cbe1f4"/><rect x="5" y="65" width="5" height="5" fill="#bfdaf1"/><rect x="10" y="65" width="5" height="5" fill="#c1dbf1"/><rect x="15" y="65" width="5" height="5" fill="#c5ddf2"/><rect x="20" y="65" width="5" height="5" fill="#cee3f4"/><rect x="25" y="65" width="5" height="5" fill="#d7e8f6"/><rect x="30" y="65" width="5" height="5" fill="#cae0f3"/><rect x="35" y="65" width="5" height="5" fill="#daeaf7"/><rect x="40" y="65" width="5" height="5" fill="#d7e7f6"/><rect x="45" y="65" width="5" height="5" fill="#dfecf8"/><rect x="50" y="65" width="5" height="5" fill="#d9e9f7"/><rect x="55" y="65" width="5" height="5" fill="#d7e7f6"/><rect x="60" y="65" width="5" height="5" fill="#dfecf8"/><rect x="65" y="65" width="5" height="5" fill="#e5f0f9"/><rect x="70" y="65" width="5" height="5" fill="#ecf4fb"/><rect x="75" y="65" width="5" height="5" fill="#e6f0f9"/><rect x="80" y="65" width="5" height="5" fill="#f2f7fc"/><rect x="85" y="65" width="5" height="5" fill="#f5f9fc"/><rect x="0" y="70" width="5" height="5" fill="#bcd8f0"/><rect x="5" y="70" width="5" height="5" fill="#b9d6f0"/><rect x="10" y="70" width="5" height="5" fill="#c6def2"/><rect x="15" y="70" width="5" height="5" fill="#c8dff3"/><rect x="20" y="70" width="5" height="5" fill="#dbeaf7"/><rect x="25" y="70" width="5" height="5" fill="#cae0f3"/><rect x="30" y="70" width="5" height="5" fill="#dbeaf7"/><rect x="35" y="70" width="5" height="5" fill="#dbeaf7"/><rect x="40" y="70" width="5" height="5" fill="#dceaf7"/><rect x="45" y="70" width="5" height="5" fill="#e0edf8"/><rect x="50" y="70" width="5" height="5" fill="#dfecf8"/><rect x="55" y="70" width="5" height="5" fill="#e7f1fa"/><rect x="60" y="70" width="5" height="5" fill="#e2eef8"/><rect x="65" y="70" width="5" height="5" fill="#ebf3fa"/><rect x="70" y="70" width="5" height="5" fill="#ebf3fa"/><rect x="75" y="70" width="5" height="5" fill="#f0f6fb"/><rect x="80" y="70" width="5" height="5" fill="#f2f7fc"/><rect x="85" y="70" width="5" height="5" fill="#f4f8fc"/><rect x="90" y="70" width="5" height="5" fill="#f7fafd"/><rect x="0" y="75" width="5" height="5" fill="#c8dff3"/><rect x="5" y="75" width="5" height="5" fill="#cae0f3"/><rect x="10" y="75" width="5" height="5" fill="#d8e8f6"/><rect x="15" y="75" width="5" height="5" fill="#d6e7f6"/><rect x="20" y="75" width="5" height="5" fill="#d2e5f5"/><rect x="25" y="75" width="5" height="5" fill="#deecf8"/><rect x="30" y="75" width="5" height="5" fill="#d5e6f6"/><rect x="35" y="75" width="5" height="5" fill="#e7f1f9"/><rect x="40" y="75" width="5" height="5" fill="#e7f1f9"/><rect x="45" y="75" width="5" height="5" fill="#e4eff9"/><rect x="50" y="75" width="5" height="5" fill="#e8f2fa"/><rect x="55" y="75" width="5" height="5" fill="#eef5fb"/><rect x="60" y="75" width="5" height="5" fill="#edf4fb"/><rect x="65" y="75" width="5" height="5" fill="#f1f6fc"/><rect x="70" y="75" width="5" height="5" fill="#f2f7fc"/><rect x="75" y="75" width="5" height="5" fill="#f3f8fc"/><rect x="0" y="80" width="5" height="5" fill="#c2dbf2"/><rect x="5" y="80" width="5" height="5" fill="#c7def3"/><rect x="10" y="80" width="5" height="5" fill="#dceaf7"/><rect x="15" y="80" width="5" height="5" fill="#dbeaf7"/><rect x="20" y="80" width="5" height="5" fill="#d3e5f5"/><rect x="25" y="80" width="5" height="5" fill="#d5e7f6"/><rect x="30" y="80" width="5" height="5" fill="#e1eef8"/><rect x="35" y="80" width="5" height="5" fill="#e3eff9"/><rect x="40" y="80" width="5" height="5" fill="#e7f1fa"/><rect x="45" y="80" width="5" height="5" fill="#e2eef8"/><rect x="50" y="80" width="5" height="5" fill="#f1f7fc"/><rect x="55" y="80" width="5" height="5" fill="#f1f7fc"/><rect x="60" y="80" width="5" height="5" fill="#f2f7fc"/><rect x="65" y="80" width="5" height="5" fill="#f2f7fc"/><rect x="0" y="85" width="5" height="5" fill="#bfdaf1"/><rect x="5" y="85" width="5" height="5" fill="#c5ddf2"/><rect x="10" y="85" width="5" height="5" fill="#e0edf8"/><rect x="15" y="85" width="5" height="5" fill="#dae9f7"/><rect x="20" y="85" width="5" height="5" fill="#ddebf7"/><rect x="25" y="85" width="5" height="5" fill="#e2eef8"/><rect x="30" y="85" width="5" height="5" fill="#e3eff9"/><rect x="35" y="85" width="5" height="5" fill="#e8f1fa"/><rect x="40" y="85" width="5" height="5" fill="#ebf3fa"/><rect x="45" y="85" width="5" height="5" fill="#f0f6fb"/><rect x="50" y="85" width="5" height="5" fill="#eff6fb"/><rect x="0" y="90" width="5" height="5" fill="#bbd7f0"/><rect x="5" y="90" width="5" height="5" fill="#d2e5f5"/><rect x="10" y="90" width="5" height="5" fill="#dfecf8"/><rect x="15" y="90" width="5" height="5" fill="#dfecf8"/><rect x="20" y="90" width="5" height="5" fill="#dae9f7"/><rect x="25" y="90" width="5" height="5" fill="#e3eef9"/><rect x="30" y="90" width="5" height="5" fill="#eef5fb"/><rect x="35" y="90" width="5" height="5" fill="#ecf3fa"/><rect x="40" y="90" width="5" height="5" fill="#f2f8fc"/><rect x="45" y="90" width="5" height="5" fill="#eff6fb"/><rect x="50" y="90" width="5" height="5" fill="#f3f8fc"/><rect x="55" y="90" width="5" height="5" fill="#f7fafd"/><rect x="0" y="95" width="5" height="5" fill="#c4ddf2"/><rect x="5" y="95" width="5" height="5" fill="#d1e4f5"/><rect x="10" y="95" width="5" height="5" fill="#cfe3f4"/><rect x="15" y="95" width="5" height="5" fill="#e0edf8"/><rect x="20" y="95" width="5" height="5" fill="#e8f1fa"/><rect x="25" y="95" width="5" height="5" fill="#e8f2fa"/><rect x="30" y="95" width="5" height="5" fill="#eff5fb"/><rect x="35" y="95" width="5" height="5" fill="#f2f7fc"/><rect x="50" y="95" width="5" height="5" fill="#f5f9fc"/><rect x="0" y="100" width="5" height="5" fill="#bfdaf1"/><rect x="5" y="100" width="5" height="5" fill="#cde2f4"/><rect x="10" y="100" width="5" height="5" fill="#d3e5f5"/><rect x="15" y="100" width="5" height="5" fill="#e6f1f9"/><rect x="20" y="100" width="5" height="5" fill="#e8f1fa"/><rect x="25" y="100" width="5" height="5" fill="#eff5fb"/><rect x="30" y="100" width="5" height="5" fill="#eff5fb"/><rect x="40" y="100" width="5" height="5" fill="#f4f9fc"/><rect x="0" y="105" width="5" height="5" fill="#c4dcf2"/><rect x="5" y="105" width="5" height="5" fill="#d9e9f6"/><rect x="10" y="105" width="5" height="5" fill="#e3eef9"/><rect x="15" y="105" width="5" height="5" fill="#dfecf8"/><rect x="20" y="105" width="5" height="5" fill="#f1f7fc"/><rect x="30" y="105" width="5" height="5" fill="#f5f9fc"/><rect x="0" y="110" width="5" height="5" fill="#d4e6f5"/><rect x="5" y="110" width="5" height="5" fill="#cee2f4"/><rect x="10" y="110" width="5" height="5" fill="#ddebf7"/><rect x="15" y="110" width="5" height="5" fill="#e2eef8"/><rect x="20" y="110" width="5" height="5" fill="#f3f8fc"/><rect x="25" y="110" width="5" height="5" fill="#f6fafd"/><rect x="0" y="115" width="5" height="5" fill="#c6def2"/><rect x="5" y="115" width="5" height="5" fill="#d3e6f5"/><rect x="10" y="115" width="5" height="5" fill="#dfecf8"/><rect x="15" y="115" width="5" height="5" fill="#e5f0f9"/><rect x="20" y="115" width="5" height="5" fill="#ecf4fa"/><rect x="0" y="120" width="5" height="5" fill="#d7e8f6"/><rect x="5" y="120" width="5" height="5" fill="#dbeaf7"/><rect x="10" y="120" width="5" height="5" fill="#ddebf7"/><rect x="15" y="120" width="5" height="5" fill="#e5f0f9"/><rect x="20" y="120" width="5" height="5" fill="#f1f7fc"/><rect x="0" y="125" width="5" height="5" fill="#d5e6f6"/><rect x="5" y="125" width="5" height="5" fill="#e0edf8"/><rect x="10" y="125" width="5" height="5" fill="#e4eff9"/><rect x="15" y="125" width="5" height="5" fill="#ebf3fa"/><rect x="20" y="125" width="5" height="5" fill="#edf4fb"/><rect x="0" y="130" width="5" height="5" fill="#cfe3f4"/><rect x="5" y="130" width="5" height="5" fill="#d4e6f5"/><rect x="10" y="130" width="5" height="5" fill="#e8f1fa"/><rect x="15" y="130" width="5" height="5" fill="#e9f2fa"/><rect x="20" y="130" width="5" height="5" fill="#f3f8fc"/><rect x="0" y="135" width="5" height="5" fill="#cee2f4"/><rect x="5" y="135" width="5" height="5" fill="#dceaf7"/><rect x="10" y="135" width="5" height="5" fill="#e5eff9"/><rect x="15" y="135" width="5" height="5" fill="#eef5fb"/><rect x="20" y="135" width="5" height="5" fill="#f4f8fc"/><rect x="0" y="140" width="5" height="5" fill="#d8e8f6"/><rect x="5" y="140" width="5" height="5" fill="#dae9f7"/><rect x="10" y="140" width="5" height="5" fill="#e1eef8"/><rect x="15" y="140" width="5" height="5" fill="#e7f1fa"/><rect x="20" y="140" width="5" height="5" fill="#f2f7fc"/><rect x="25" y="140" width="5" height="5" fill="#f7fafd"/><rect x="0" y="145" width="5" height="5" fill="#d3e5f5"/><rect x="5" y="145" width="5" height="5" fill="#dcebf7"/><rect x="10" y="145" width="5" height="5" fill="#ddebf7"/><rect x="15" y="145" width="5" height="5" fill="#ecf4fa"/><rect x="20" y="145" width="5" height="5" fill="#f1f6fc"/><rect x="25" y="145" width="5" height="5" fill="#f7fafd"/><rect x="0" y="150" width="5" height="5" fill="#d3e5f5"/><rect x="5" y="150" width="5" height="5" fill="#ddebf7"/><rect x="10" y="150" width="5" height="5" fill="#ecf4fb"/><rect x="15" y="150" width="5" height="5" fill="#ebf3fa"/><rect x="20" y="150" width="5" height="5" fill="#f7fafd"/><rect x="0" y="155" width="5" height="5" fill="#d8e8f6"/><rect x="5" y="155" width="5" height="5" fill="#e1eef8"/><rect x="10" y="155" width="5" height="5" fill="#edf5fb"/><rect x="15" y="155" width="5" height="5" fill="#eef5fb"/><rect x="20" y="155" width="5" height="5" fill="#f1f6fc"/><rect x="0" y="160" width="5" height="5" fill="#ddebf7"/><rect x="5" y="160" width="5" height="5" fill="#dceaf7"/><rect x="10" y="160" width="5" height="5" fill="#e6f0f9"/><rect x="15" y="160" width="5" height="5" fill="#ecf4fb"/><rect x="20" y="160" width="5" height="5" fill="#f1f7fc"/><rect x="25" y="160" width="5" height="5" fill="#f6fafd"/><rect x="0" y="165" width="5" height="5" fill="#d9e9f6"/><rect x="5" y="165" width="5" height="5" fill="#deebf7"/><rect x="10" y="165" width="5" height="5" fill="#e8f1fa"/><rect x="15" y="165" width="5" height="5" fill="#e8f2fa"/><rect x="20" y="165" width="5" height="5" fill="#f1f7fc"/><rect x="25" y="165" width="5" height="5" fill="#f7fafd"/><rect x="0" y="170" width="5" height="5" fill="#e5f0f9"/><rect x="5" y="170" width="5" height="5" fill="#e1edf8"/><rect x="10" y="170" width="5" height="5" fill="#e4eff9"/><rect x="15" y="170" width="5" height="5" fill="#edf4fb"/><rect x="20" y="170" width="5" height="5" fill="#f5f9fc"/><rect x="0" y="175" width="5" height="5" fill="#deecf8"/><rect x="5" y="175" width="5" height="5" fill="#e3eff9"/><rect x="10" y="175" width="5" height="5" fill="#e9f2fa"/><rect x="15" y="175" width="5" height="5" fill="#eef5fb"/><rect x="20" y="175" width="5" height="5" fill="#f4f8fc"/><rect x="0" y="180" width="5" height="5" fill="#dbeaf7"/><rect x="5" y="180" width="5" height="5" fill="#e1edf8"/><rect x="10" y="180" width="5" height="5" fill="#e5f0f9"/><rect x="15" y="180" width="5" height="5" fill="#f3f8fc"/><rect x="20" y="180" width="5" height="5" fill="#f5f9fc"/><rect x="0" y="185" width="5" height="5" fill="#e5f0f9"/><rect x="5" y="185" width="5" height="5" fill="#e7f1f9"/><rect x="10" y="185" width="5" height="5" fill="#edf4fb"/><rect x="15" y="185" width="5" height="5" fill="#f2f8fc"/><rect x="20" y="185" width="5" height="5" fill="#f4f9fc"/><rect x="0" y="190" width="5" height="5" fill="#e4eff9"/><rect x="5" y="190" width="5" height="5" fill="#e9f2fa"/><rect x="10" y="190" width="5" height="5" fill="#f0f6fb"/><rect x="15" y="190" width="5" height="5" fill="#f3f8fc"/><rect x="0" y="195" width="5" height="5" fill="#e7f1f9"/><rect x="5" y="195" width="5" height="5" fill="#ecf4fb"/><rect x="10" y="195" width="5" height="5" fill="#eaf2fa"/><rect x="15" y="195" width="5" height="5" fill="#f6fafd"/><rect x="20" y="195" width="5" height="5" fill="#f4f8fc"/><rect x="0" y="200" width="5" height="5" fill="#e5eff9"/><rect x="5" y="200" width="5" height="5" fill="#e9f2fa"/><rect x="10" y="200" width="5" height="5" fill="#eff6fb"/><rect x="15" y="200" width="5" height="5" fill="#f4f8fc"/><rect x="0" y="205" width="5" height="5" fill="#e1eef8"/><rect x="5" y="205" width="5" height="5" fill="#edf5fb"/><rect x="10" y="205" width="5" height="5" fill="#f1f7fc"/><rect x="15" y="205" width="5" height="5" fill="#f5f9fc"/><rect x="0" y="210" width="5" height="5" fill="#ecf4fb"/><rect x="5" y="210" width="5" height="5" fill="#ecf4fb"/><rect x="10" y="210" width="5" height="5" fill="#eef5fb"/><rect x="15" y="210" width="5" height="5" fill="#f6f9fd"/><rect x="20" y="210" width="5" height="5" fill="#f5f9fc"/><rect x="0" y="215" width="5" height="5" fill="#e3eff9"/><rect x="5" y="215" width="5" height="5" fill="#e8f1fa"/><rect x="10" y="215" width="5" height="5" fill="#ecf4fb"/><rect x="0" y="220" width="5" height="5" fill="#ecf4fb"/><rect x="5" y="220" width="5" height="5" fill="#f0f6fb"/><rect x="10" y="220" width="5" height="5" fill="#f4f8fc"/><rect x="15" y="220" width="5" height="5" fill="#f3f8fc"/><rect x="0" y="225" width="5" height="5" fill="#eef5fb"/><rect x="5" y="225" width="5" height="5" fill="#f1f7fc"/><rect x="10" y="225" width="5" height="5" fill="#f4f8fc"/><rect x="15" y="225" width="5" height="5" fill="#f4f8fc"/><rect x="0" y="230" width="5" height="5" fill="#f5f9fd"/><rect x="5" y="230" width="5" height="5" fill="#f2f7fc"/><rect x="15" y="230" width="5" height="5" fill="#f6f9fd"/><rect x="0" y="235" width="5" height="5" fill="#f2f7fc"/><rect x="5" y="235" width="5" height="5" fill="#f6f9fd"/><rect x="10" y="235" width="5" height="5" fill="#f6fafd"/><rect x="0" y="240" width="5" height="5" fill="#f1f7fc"/><rect x="5" y="240" width="5" height="5" fill="#f1f6fc"/><rect x="10" y="240" width="5" height="5" fill="#f4f9fc"/><rect x="0" y="245" width="5" height="5" fill="#f0f6fb"/><rect x="0" y="250" width="5" height="5" fill="#f6f9fd"/><rect x="10" y="250" width="5" height="5" fill="#f5f9fc"/></svg>
</div>

<svg class="a" style="left:409px;top:130px" width="35" height="30" viewBox="0 0 35 30">
  <path d="M1.5 27.5V8.5Q1.5 6 4 4.5L7 1.5h7l4 5h13.5q2 0 2 2v17q0 2-2 2z" fill="#f8e890" stroke="#807030"/>
  <path d="M3 9h29" fill="none" stroke="#fff8c8"/>
  <path d="M2 28.5h30.5q1.5 0 1.5-1.5V8.5" fill="none" stroke="#403810" stroke-width="1.2"/>
</svg>
<div class="t" style="left:410px;top:170px;font-size:23px;line-height:24px;font-weight:bold;-webkit-text-stroke:0.6px #000">Bin</div>
<div class="a" style="left:395px;top:197px;width:106px;height:2px;background:linear-gradient(to right,#d05050 0%,#d8a070 25%,#e0d070 45%,#90a890 70%,#6080a0 100%)"></div>
<div class="t" style="left:410px;top:222px;font-weight:bold;letter-spacing:1.1px">Tpx.ico</div>
<div class="t" style="left:410px;top:236px;letter-spacing:0.65px">Значок</div>
<div class="t" style="left:410px;top:262px;letter-spacing:0.65px">Изменен:</div>
<div class="t" style="left:410px;top:275px;letter-spacing:0.65px">05.10.92</div>
<div class="t" style="left:410px;top:288px;letter-spacing:0.65px">7:00</div>
<div class="t" style="left:410px;top:313px;letter-spacing:0.65px">Размер:</div>
<div class="t" style="left:410px;top:326px;letter-spacing:0.65px">766 байт</div>
<svg class="a" style="left:500px;top:364px" width="12" height="20"><use href="#cursor"/></svg>
<div class="a" style="left:516px;top:116px;width:282px;height:446px;background:#fff;overflow:hidden">
<div class="btn" style="left:0px;top:0;width:175px;height:17px;overflow:hidden"></div>
<div class="t" style="left:7px;top:2px">Имя</div>
<div class="btn" style="left:175px;top:0;width:60px;height:17px;overflow:hidden"></div>
<div class="t" style="left:175px;width:55px;text-align:right;top:2px">Размер</div>
<div class="btn" style="left:235px;top:0;width:31px;height:17px;overflow:hidden"></div>
<div class="t" style="left:242px;top:2px">Тип</div>
<svg class="a" style="left:2px;top:19px" width="16" height="16"><use href="#doc"/></svg>
<div class="t" style="left:21px;top:21px">Pattern</div>
<div class="t" style="left:44px;width:185px;text-align:right;top:21px">1 КБ</div>
<div class="t" style="left:242px;top:21px">Файл</div>
<svg class="a" style="left:2px;top:36px" width="16" height="16"><use href="#app"/></svg>
<div class="t" style="left:21px;top:38px">Ppatch96</div>
<div class="t" style="left:44px;width:185px;text-align:right;top:38px">7 КБ</div>
<div class="t" style="left:242px;top:38px">Приложение</div>
<svg class="a" style="left:2px;top:53px" width="16" height="16"><use href="#app"/></svg>
<div class="t" style="left:21px;top:55px">Prnfltr</div>
<div class="t" style="left:44px;width:185px;text-align:right;top:55px">7 КБ</div>
<div class="t" style="left:242px;top:55px">Приложение</div>
<svg class="a" style="left:2px;top:70px" width="16" height="16"><use href="#app"/></svg>
<div class="t" style="left:21px;top:72px">Rtm</div>
<div class="t" style="left:44px;width:185px;text-align:right;top:72px">84 КБ</div>
<div class="t" style="left:242px;top:72px">Приложение</div>
<svg class="a" style="left:2px;top:87px" width="16" height="16"><use href="#app"/></svg>
<div class="t" style="left:21px;top:89px">Rtmres</div>
<div class="t" style="left:44px;width:185px;text-align:right;top:89px">8 КБ</div>
<div class="t" style="left:242px;top:89px">Приложение</div>
<svg class="a" style="left:2px;top:104px" width="16" height="16"><use href="#app"/></svg>
<div class="t" style="left:21px;top:106px">Temc</div>
<div class="t" style="left:44px;width:185px;text-align:right;top:106px">57 КБ</div>
<div class="t" style="left:242px;top:106px">Приложение</div>
<svg class="a" style="left:2px;top:121px" width="16" height="16"><use href="#doc"/></svg>
<div class="t" style="left:21px;top:123px">Thelp.cfg</div>
<div class="t" style="left:44px;width:185px;text-align:right;top:123px">1 КБ</div>
<div class="t" style="left:242px;top:123px">Файл</div>
<svg class="a" style="left:2px;top:138px" width="16" height="16"><use href="#app"/></svg>
<div class="t" style="left:21px;top:140px">Thelp</div>
<div class="t" style="left:44px;width:185px;text-align:right;top:140px">11 КБ</div>
<div class="t" style="left:242px;top:140px">Приложение</div>
<svg class="a" style="left:2px;top:155px" width="16" height="16"><use href="#doc"/></svg>
<div class="t" style="left:21px;top:157px">Tpc.cfg</div>
<div class="t" style="left:44px;width:185px;text-align:right;top:157px">1 КБ</div>
<div class="t" style="left:242px;top:157px">Файл</div>
<svg class="a" style="left:2px;top:172px" width="16" height="16"><use href="#app"/></svg>
<div class="t" style="left:21px;top:174px">Tpc</div>
<div class="t" style="left:44px;width:185px;text-align:right;top:174px">74 КБ</div>
<div class="t" style="left:242px;top:174px">Приложение</div>
<svg class="a" style="left:2px;top:189px" width="16" height="16"><use href="#app"/></svg>
<div class="t" style="left:21px;top:191px">Tpumover</div>
<div class="t" style="left:44px;width:185px;text-align:right;top:191px">10 КБ</div>
<div class="t" style="left:242px;top:191px">Приложение</div>
<svg class="a" style="left:2px;top:206px" width="16" height="16"><use href="#doc"/></svg>
<div class="t" style="left:21px;top:208px">Tpx.ds1</div>
<div class="t" style="left:44px;width:185px;text-align:right;top:208px">2 КБ</div>
<div class="t" style="left:242px;top:208px">Файл</div>
<svg class="a" style="left:2px;top:223px" width="16" height="16"><use href="#app"/></svg>
<div class="t" style="left:21px;top:225px">Tpx</div>
<div class="t" style="left:44px;width:185px;text-align:right;top:225px">462 КБ</div>
<div class="t" style="left:242px;top:225px">Приложение</div>
<svg class="a" style="left:2px;top:240px" width="16" height="16" viewBox="0 0 16 16"><rect x="0" y="0" width="16" height="16" fill="#f4f4f8"/><rect x="0" y="0" width="3.5" height="16" fill="#303848"/><path d="M1.5 2v11" stroke="#8898a8" fill="none"/><path d="M5.5 2.5l1.5 4.5 1.5-3.5 1.5 3.5 1.5-4.5M13 1v6M15 1v6M13 4h2" stroke="#000" fill="none"/><circle cx="8.5" cy="10" r="2.7" fill="#2030b0"/><path d="M4 14.5h4" stroke="#c03030" stroke-width="2" fill="none"/><path d="M15.5 2v14M3 15.5h13" stroke="#303030" fill="none"/><path d="M12 9l3 3" stroke="#202020" stroke-width="1.5" fill="none"/></svg>
<div class="t" style="left:21px;top:242px">Tpx</div>
<div class="t" style="left:44px;width:185px;text-align:right;top:242px">1 КБ</div>
<div class="t" style="left:242px;top:242px">Значок</div>
<svg class="a" style="left:2px;top:257px" width="16" height="16" viewBox="0 0 16 16"><rect width="16" height="16" fill="#1a1a20"/><path d="M1.5 8V1.5l3 4 3-4V8" stroke="#3040a8" stroke-width="2" fill="none"/><path d="M9.5 1h6v6h-6z" fill="#404830"/><circle cx="12" cy="3.5" r="1.6" fill="#90a868"/><circle cx="12" cy="12" r="3.2" fill="#302800" stroke="#d8c820" stroke-width="2"/><rect x="0.5" y="9.5" width="6.5" height="6" fill="#fff" stroke="#000"/><path d="M2.5 14v-2q0-1 1-1h1" stroke="#000" fill="none" stroke-width="1.2"/><path d="M4.3 9.5l2 1.5-2 1.5z" fill="#000"/></svg>
<div class="t" style="left:21px;top:259px">Tpx</div>
<div class="t" style="left:44px;width:185px;text-align:right;top:259px">1 КБ</div>
<div class="t" style="left:242px;top:259px">Ярлык</div>
<svg class="a" style="left:2px;top:274px" width="16" height="16"><use href="#doc"/></svg>
<div class="t" style="left:21px;top:276px">Tpx.psm</div>
<div class="t" style="left:44px;width:185px;text-align:right;top:276px">8 КБ</div>
<div class="t" style="left:242px;top:276px">Файл</div>
<svg class="a" style="left:2px;top:291px" width="16" height="16"><use href="#doc"/></svg>
<div class="t" style="left:21px;top:293px">Tpx.tp</div>
<div class="t" style="left:44px;width:185px;text-align:right;top:293px">5 КБ</div>
<div class="t" style="left:242px;top:293px">Файл</div>
<svg class="a" style="left:2px;top:308px" width="16" height="16"><use href="#doc"/></svg>
<div class="t" style="left:21px;top:310px">Turbo.dsk</div>
<div class="t" style="left:44px;width:185px;text-align:right;top:310px">1 КБ</div>
<div class="t" style="left:242px;top:310px">Файл</div>
<svg class="a" style="left:2px;top:325px" width="16" height="16"><use href="#app"/></svg>
<div class="t" style="left:21px;top:327px">Turbo</div>
<div class="t" style="left:44px;width:185px;text-align:right;top:327px">394 КБ</div>
<div class="t" style="left:242px;top:327px">Приложение</div>
<svg class="a" style="left:2px;top:342px" width="16" height="16" viewBox="0 0 16 16"><rect x="0" y="0" width="16" height="16" fill="#c82818"/><rect x="0" y="0" width="3.5" height="16" fill="#384030"/><path d="M1.5 2v12" stroke="#709070" fill="none"/><path d="M3.5 0v16" stroke="#000" fill="none"/><rect x="6.5" y="2" width="6" height="14" fill="#e89028"/><rect x="7.5" y="4" width="4" height="11" fill="#f0d050"/><path d="M7 2.5h5" stroke="#f8c050" fill="none"/><rect x="13.5" y="0" width="2.5" height="16" fill="#901810"/><path d="M0 15.5h16" stroke="#200000" fill="none"/></svg>
<div class="t" style="left:21px;top:344px">Turbo</div>
<div class="t" style="left:44px;width:185px;text-align:right;top:344px">1 КБ</div>
<div class="t" style="left:242px;top:344px">Значок</div>
<svg class="a" style="left:2px;top:359px" width="16" height="16" viewBox="0 0 16 16"><rect x="0" y="0" width="16" height="16" fill="#d0d0d0"/><path d="M1 2.5h14" stroke="#606868" stroke-width="2" fill="none" stroke-dasharray="2 1"/><path d="M1 5.5h14" stroke="#a0a0a0" fill="none"/><rect x="8" y="9" width="7" height="6.5" fill="#c8c8c8" stroke="#404040"/><path d="M9.5 11h4M9.5 13h4" stroke="#202020" fill="none"/><rect x="0.5" y="9.5" width="6.5" height="6" fill="#fff" stroke="#000"/><path d="M2.5 14v-2q0-1 1-1h1" stroke="#000" fill="none" stroke-width="1.2"/><path d="M4.3 9.5l2 1.5-2 1.5z" fill="#000"/></svg>
<div class="t" style="left:21px;top:361px">Turbo</div>
<div class="t" style="left:44px;width:185px;text-align:right;top:361px">1 КБ</div>
<div class="t" style="left:242px;top:361px">Ярлык</div>
<svg class="a" style="left:2px;top:376px" width="16" height="16"><use href="#doc"/></svg>
<div class="t" style="left:21px;top:378px">Turbo.tp</div>
<div class="t" style="left:44px;width:185px;text-align:right;top:378px">5 КБ</div>
<div class="t" style="left:242px;top:378px">Файл</div>
<svg class="a" style="left:2px;top:393px" width="16" height="16"><use href="#doc"/></svg>
<div class="t" style="left:21px;top:395px">Turbo.tph</div>
<div class="t" style="left:44px;width:185px;text-align:right;top:395px">717 КБ</div>
<div class="t" style="left:242px;top:395px">Файл</div>
<svg class="a" style="left:2px;top:410px" width="16" height="16"><use href="#doc"/></svg>
<div class="t" style="left:21px;top:412px">Turbo.tpl</div>
<div class="t" style="left:44px;width:185px;text-align:right;top:412px">48 КБ</div>
<div class="t" style="left:242px;top:412px">Файл</div>
<svg class="a" style="left:2px;top:427px" width="16" height="16"><use href="#doc"/></svg>
<div class="t" style="left:21px;top:429px">Tvision.tph</div>
<div class="t" style="left:44px;width:185px;text-align:right;top:429px">593 КБ</div>
<div class="t" style="left:242px;top:429px">Файл</div>
</div>

<div class="a track" style="left:782px;top:132px;width:16px;height:430px"></div>
<div class="btn" style="left:782px;top:116px;width:16px;height:16px"><svg class="a" style="left:3px;top:5px" width="8" height="5"><path d="M0 4h7l-3.5-4z" fill="#000"/></svg></div>
<div class="btn" style="left:782px;top:281px;width:16px;height:265px"></div>
<div class="btn" style="left:782px;top:546px;width:16px;height:16px"><svg class="a" style="left:3px;top:5px" width="8" height="5"><path d="M0 0h7l-3.5 4z" fill="#000"/></svg></div>
<div class="a track" style="left:516px;top:562px;width:266px;height:16px"></div>
<div class="btn" style="left:516px;top:562px;width:16px;height:16px"><svg class="a" style="left:5px;top:3px" width="5" height="8"><path d="M4 0v7l-4-3.5z" fill="#000"/></svg></div>
<div class="btn" style="left:531px;top:562px;width:133px;height:16px"></div>
<div class="a" style="left:782px;top:562px;width:16px;height:16px;background:#c0c0c0"></div>
<div class="a" style="left:798px;top:115px;width:2px;height:464px;background:#c0c0c0"></div>

<div class="a" style="left:0;top:580px;width:800px;height:20px;background:#c0c0c0"></div>
<div class="a" style="left:2px;top:582px;width:238px;height:18px;border-top:1px solid #808080;border-left:1px solid #808080;border-right:1px solid #fff"></div>
<div class="a" style="left:242px;top:582px;width:338px;height:18px;border-top:1px solid #808080;border-left:1px solid #808080;border-right:1px solid #fff"></div>
<div class="t" style="left:245px;top:585px">766 байт</div>
<div class="a" style="left:582px;top:582px;width:218px;height:18px;border-top:1px solid #808080;border-left:1px solid #808080"></div>
<svg class="a" style="left:586px;top:583px" width="16" height="16" viewBox="0 0 16 16">
  <rect x="1.5" y="1.5" width="13" height="10" fill="#c0c0c0" stroke="#000"/>
  <rect x="3.5" y="3.5" width="9" height="6" fill="#2090b0" stroke="#404040"/>
  <path d="M0.5 13.5h15v2h-15z" fill="#c0c0c0" stroke="#404040"/>
</svg>
<div class="t" style="left:604px;top:585px">Мой компьютер</div>

<svg class="a" style="left:725px;top:530px" width="75" height="70" viewBox="0 0 75 70">
  <defs><filter id="blr" x="-50%" y="-50%" width="200%" height="200%"><feGaussianBlur stdDeviation="2"/></filter></defs>
  <ellipse cx="48" cy="64" rx="26" ry="3" fill="#000" opacity="0.55" filter="url(#blr)"/>
  <path d="M62 33 A18 17.5 0 1 0 63 49" fill="none" stroke="#b81818" stroke-width="5.5"/>
  <path d="M31 56L48 23L57 51" fill="none" stroke="#18188c" stroke-width="6" stroke-linejoin="round" stroke-linecap="round"/>
  <path d="M37 45h19" fill="none" stroke="#18188c" stroke-width="5"/>
</svg>
</body></html>
